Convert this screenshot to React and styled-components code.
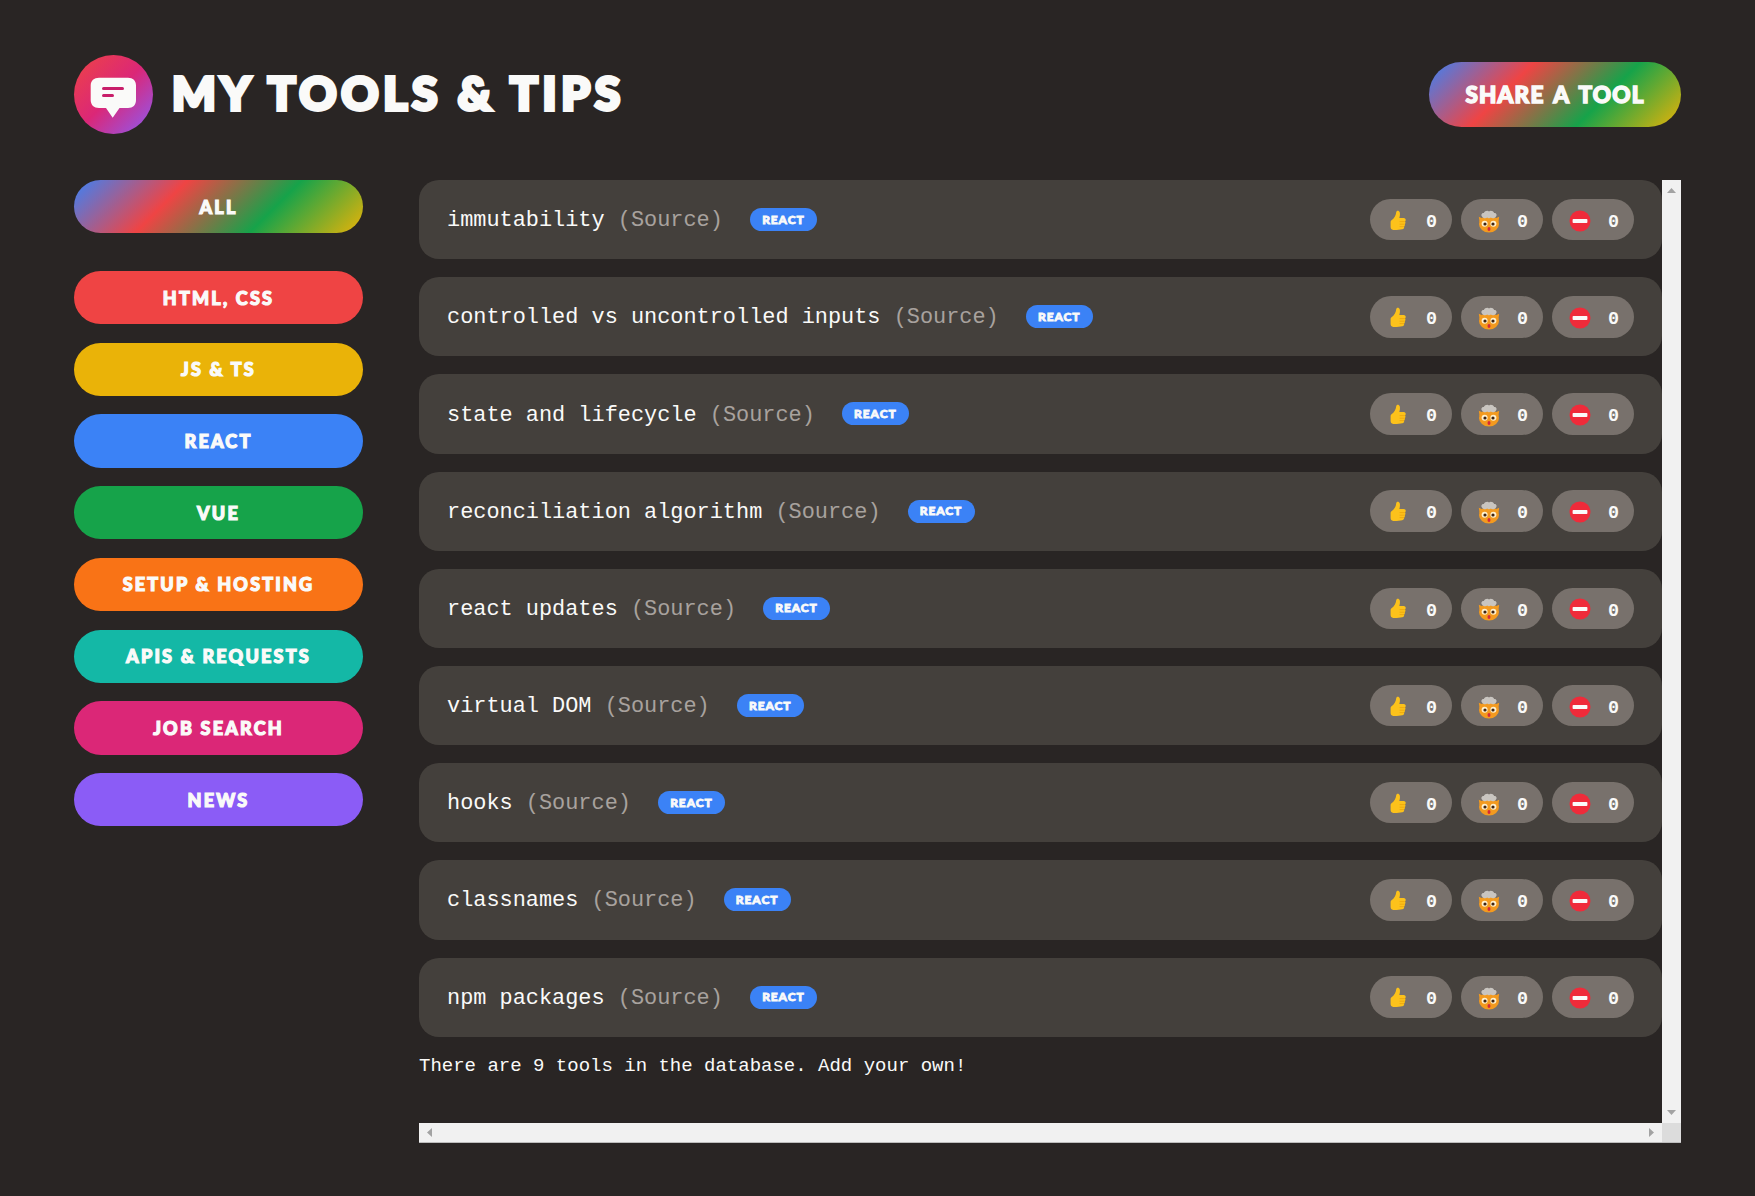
import React from "react";
import styled, { createGlobalStyle } from "styled-components";

const display = `"Lato", "Open Sans", sans-serif`;
const mono = `"Liberation Mono", "DejaVu Sans Mono", monospace`;
const rainbow = "linear-gradient(135deg, #3b82f6, #ef4444, #16a34a, #eab308)";

const Global = createGlobalStyle`
  html, body { margin: 0; height: 100%; background: #292524; overflow: hidden; }
  #root { height: 100%; }
`;

const Page = styled.div`
  box-sizing: border-box;
  height: 100%;
  padding: 55px 74px 53.5px;
  display: flex;
  flex-direction: column;
  gap: 46px;
  color: #fafaf9;
`;
const Header = styled.header`
  display: flex;
  align-items: center;
  justify-content: space-between;
  height: 79px;
  flex: none;
`;
const Brand = styled.div`
  display: flex;
  align-items: center;
  gap: 19px;
`;
const Logo = styled.div`
  width: 79px;
  height: 79px;
  border-radius: 50%;
  background: linear-gradient(135deg, #ef4444, #db2777, #8b5cf6);
  flex: none;
  svg { display: block; }
`;
const Title = styled.h1`
  margin: 0;
  padding-bottom: 4px;
  font: 900 46px/1 ${display};
  -webkit-text-stroke: 3.8px #fafaf9;
  letter-spacing: 4.7px;
  white-space: nowrap;
`;
const ShareButton = styled.button`
  width: 252px;
  height: 65px;
  border: 0;
  border-radius: 33px;
  background: ${rainbow};
  color: #fafaf9;
  font: 900 22.5px/1 ${display};
  -webkit-text-stroke: 1.5px #fafaf9;
  letter-spacing: 1.2px;
  word-spacing: 3px;
  padding: 2px 0 0;
`;
const Body = styled.div`
  flex: 1;
  min-height: 0;
  display: grid;
  grid-template-columns: 289px 1fr;
  gap: 56px;
`;
const Sidebar = styled.nav`
  display: flex;
  flex-direction: column;
  gap: 18.4px;
`;
const NavButton = styled.button`
  height: 53.3px;
  flex: none;
  border: 0;
  border-radius: 27px;
  padding: 0;
  background: ${(p) => p.$bg};
  color: #fafaf9;
  font: 900 18px/1 ${display};
  -webkit-text-stroke: 1.2px #fafaf9;
  letter-spacing: 2.2px;
  margin-bottom: ${(p) => (p.$first ? "19.4px" : "0")};
`;
const ScrollFrame = styled.section`
  min-width: 0;
  min-height: 0;
  display: grid;
  grid-template-columns: 1fr 19px;
  grid-template-rows: 1fr 19.5px;
`;
const Main = styled.main`
  min-width: 0;
  min-height: 0;
  overflow: hidden;
`;
const VerticalBar = styled.div`
  background: #f1f1f1;
  display: flex;
  flex-direction: column;
  align-items: center;
  justify-content: space-between;
  padding: 8px 0;
`;
const HorizontalBar = styled.div`
  box-sizing: border-box;
  background: #f1f1f1;
  border-bottom: 1px solid #bdbdbd;
  display: flex;
  align-items: center;
  justify-content: space-between;
  padding: 0 8px;
`;
const BarCorner = styled.div`
  box-sizing: border-box;
  background: #dcdcdc;
  border-bottom: 1px solid #bdbdbd;
`;
const ToolList = styled.ul`
  list-style: none;
  margin: 0;
  padding: 0;
  display: flex;
  flex-direction: column;
  gap: 18px;
`;
const ToolRow = styled.li`
  height: 79.2px;
  box-sizing: border-box;
  padding: 0 28px 0 28px;
  border-radius: 20px;
  background: #44403c;
  display: flex;
  align-items: center;
  justify-content: space-between;
`;
const ToolInfo = styled.div`
  display: flex;
  align-items: center;
  gap: 27px;
  font: 400 21.9px/1 ${mono};
  white-space: pre;
`;
const ToolText = styled.span`
  padding-top: 3px;
`;
const ToolName = styled.span`
  color: #fafaf9;
`;
const Source = styled.span`
  color: #a8a29e;
`;
const Badge = styled.span`
  width: 67px;
  height: 23px;
  border-radius: 12px;
  background: #3b82f6;
  color: #fafaf9;
  display: flex;
  align-items: center;
  justify-content: center;
  font: 900 12px/1 ${display};
  -webkit-text-stroke: 0.8px #fafaf9;
  letter-spacing: 0.9px;
`;
const Reactions = styled.div`
  display: flex;
  gap: 9px;
`;
const ReactionPill = styled.button`
  width: 82px;
  height: 41.5px;
  box-sizing: border-box;
  border: 0;
  border-radius: 21px;
  background: #78716c;
  padding: 7px 15px 0 16px;
  display: flex;
  align-items: center;
  justify-content: space-between;
  color: #fafaf9;
  font: 700 18.4px/1 ${mono};
  svg { display: block; margin-top: -5px; }
`;
const Footnote = styled.p`
  margin: 18.5px 0 0;
  font: 400 19px/22px ${mono};
  color: #fafaf9;
`;

const LogoMark = () => (
  <svg width="79" height="79" viewBox="0 0 79 79">
    <path
      d="M25 22.7H54C59 22.7 62 25.7 62 30.5V45C62 50 59 53 54 53H45.5L38.7 62.7L32 53H25C20 53 16.7 50 16.7 45V30.5C16.7 25.7 20 22.7 25 22.7Z"
      fill="#fafaf9"
    />
    <rect x="28" y="32" width="22" height="3" rx="1.5" fill="#c81e6a" />
    <rect x="28" y="39" width="12" height="3" rx="1.5" fill="#c81e6a" />
  </svg>
);

const ThumbIcon = () => (
  <svg width="24" height="24" viewBox="0 0 24 24">
    <path
      d="M5.5 11.2C8.2 9.5 10 6.5 10.2 3.3C10.3 1.2 13.2 1 13.8 3.6C14.2 5.5 13.8 7.6 13.3 9H17.6C19.2 9 19.8 10 19.7 11C19.7 11.7 19.4 12.2 19 12.5C19.6 13 19.7 14.4 18.8 15.1C19.2 15.8 18.9 17 18.2 17.4C18.4 18.4 17.9 19.9 16.2 20.2C14 20.8 9.6 21.2 7.2 21C5.5 20.8 4.6 19.4 4.6 17.8V13C4.6 12.3 4.9 11.6 5.5 11.2Z"
      fill="#fcc21b"
    />
    <path
      d="M13.6 12.6H18.8M13.6 15.2H18.7M13.6 17.6H18"
      stroke="#eda60c"
      strokeWidth="0.9"
      fill="none"
    />
  </svg>
);

const HeadIcon = () => (
  <svg width="24" height="24" viewBox="0 0 24 24">
    <ellipse cx="12" cy="15" rx="10" ry="8.6" fill="#f39a1f" />
    <path d="M2.6 13L1.8 7.8L7 10ZM21.4 13L22.2 7.8L17 10Z" fill="#f39a1f" />
    <path
      d="M5 7.4C3.6 6 4.8 3.8 6.9 4C7.6 1.8 10.8 1 12 2.4C13.4 1 16.4 1.8 17.1 4C19.2 3.8 20.4 6 19 7.4C18.2 9.4 15 9.8 13.8 8.4C13 9.4 11 9.4 10.2 8.4C9 9.8 5.8 9.4 5 7.4Z"
      fill="#c9c5c0"
    />
    <circle cx="7.6" cy="14.8" r="3" fill="#fff1cf" />
    <circle cx="16.4" cy="14.8" r="3" fill="#fff1cf" />
    <circle cx="8" cy="15" r="1.6" fill="#3e2412" />
    <circle cx="16" cy="15" r="1.6" fill="#3e2412" />
    <ellipse cx="12" cy="20" rx="1.5" ry="1.9" fill="#d62839" />
  </svg>
);

const NoEntryIcon = () => (
  <svg width="24" height="24" viewBox="0 0 24 24">
    <circle cx="12" cy="12" r="10.5" fill="#ef2b3a" />
    <rect x="4.6" y="10" width="14.8" height="4" rx="0.8" fill="#fafaf9" />
  </svg>
);

const arrowPaths = {
  up: "M0 5L4.5 0L9 5Z",
  down: "M0 0L4.5 5L9 0Z",
  left: "M5 0L0 4.5L5 9Z",
  right: "M0 0L5 4.5L0 9Z",
};

const BarArrow = ({ dir }) => {
  const flat = dir === "up" || dir === "down";
  return (
    <svg width={flat ? 9 : 5} height={flat ? 5 : 9} viewBox={flat ? "0 0 9 5" : "0 0 5 9"}>
      <path d={arrowPaths[dir]} fill="#a3a3a3" />
    </svg>
  );
};

const categories = [
  { label: "ALL", bg: rainbow, first: true },
  { label: "HTML, CSS", bg: "#ef4444" },
  { label: "JS & TS", bg: "#eab308" },
  { label: "REACT", bg: "#3b82f6" },
  { label: "VUE", bg: "#16a34a" },
  { label: "SETUP & HOSTING", bg: "#f97316" },
  { label: "APIS & REQUESTS", bg: "#14b8a6" },
  { label: "JOB SEARCH", bg: "#db2777" },
  { label: "NEWS", bg: "#8b5cf6" },
];

const tools = [
  "immutability",
  "controlled vs uncontrolled inputs",
  "state and lifecycle",
  "reconciliation algorithm",
  "react updates",
  "virtual DOM",
  "hooks",
  "classnames",
  "npm packages",
];

const reactions = [ThumbIcon, HeadIcon, NoEntryIcon];

export default function App() {
  return (
    <>
      <Global />
      <Page>
        <Header>
          <Brand>
            <Logo>
              <LogoMark />
            </Logo>
            <Title>MY TOOLS &amp; TIPS</Title>
          </Brand>
          <ShareButton>SHARE A TOOL</ShareButton>
        </Header>
        <Body>
          <Sidebar>
            {categories.map((c) => (
              <NavButton key={c.label} $bg={c.bg} $first={c.first}>
                {c.label}
              </NavButton>
            ))}
          </Sidebar>
          <ScrollFrame>
            <Main>
              <ToolList>
                {tools.map((name) => (
                  <ToolRow key={name}>
                    <ToolInfo>
                      <ToolText>
                        <ToolName>{name} </ToolName>
                        <Source>(Source)</Source>
                      </ToolText>
                      <Badge>REACT</Badge>
                    </ToolInfo>
                    <Reactions>
                      {reactions.map((Icon, i) => (
                        <ReactionPill key={i}>
                          <Icon />0
                        </ReactionPill>
                      ))}
                    </Reactions>
                  </ToolRow>
                ))}
              </ToolList>
              <Footnote>There are 9 tools in the database. Add your own!</Footnote>
            </Main>
            <VerticalBar>
              <BarArrow dir="up" />
              <BarArrow dir="down" />
            </VerticalBar>
            <HorizontalBar>
              <BarArrow dir="left" />
              <BarArrow dir="right" />
            </HorizontalBar>
            <BarCorner />
          </ScrollFrame>
        </Body>
      </Page>
    </>
  );
}
